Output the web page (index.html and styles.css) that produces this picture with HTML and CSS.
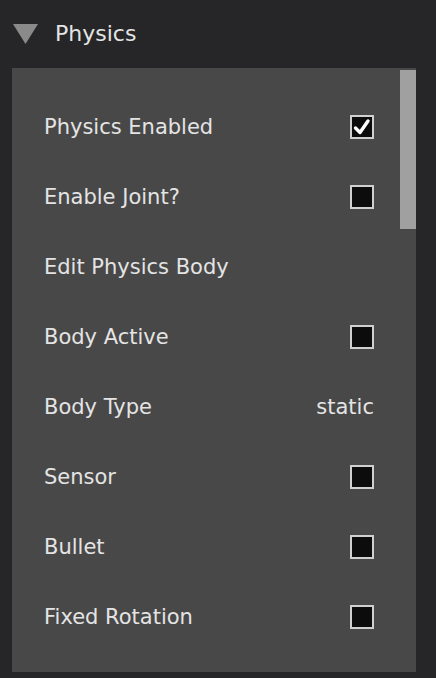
FILE: index.html
```html
<!DOCTYPE html>
<html>
<head>
<meta charset="utf-8">
<link rel="stylesheet" href="styles.css">
</head>
<body>
<div class="header">
  <svg class="tri" width="25" height="20" viewBox="0 0 25 20"><polygon points="0,0 25,0 12.5,20" fill="#8a8a8a"/></svg>
  <span class="title">Physics</span>
</div>
<div class="panel">
  <div class="scrollbar"></div>
  <div class="row"><span class="label">Physics Enabled</span><span class="cb checked"><svg width="20" height="20" viewBox="0 0 20 20"><path d="M3.5 11 L8 15.5 L16 4" fill="none" stroke="#fff" stroke-width="3.4" stroke-linecap="round" stroke-linejoin="round"/></svg></span></div>
  <div class="row"><span class="label">Enable Joint?</span><span class="cb"></span></div>
  <div class="row"><span class="label">Edit Physics Body</span></div>
  <div class="row"><span class="label">Body Active</span><span class="cb"></span></div>
  <div class="row"><span class="label">Body Type</span><span class="value">static</span></div>
  <div class="row"><span class="label">Sensor</span><span class="cb"></span></div>
  <div class="row"><span class="label">Bullet</span><span class="cb"></span></div>
  <div class="row"><span class="label">Fixed Rotation</span><span class="cb"></span></div>
</div>
</body>
</html>
```
FILE: styles.css
```css
html, body {
  margin: 0;
  padding: 0;
  background: #262628;
  width: 436px;
  height: 678px;
  overflow: hidden;
  font-family: "DejaVu Sans", sans-serif;
  color: #e4e4e4;
}
.header {
  height: 68px;
  display: flex;
  align-items: center;
  padding-left: 13px;
  box-sizing: border-box;
}
.tri {
  display: block;
  margin-top: -1px;
}
.title {
  margin-left: 17px;
  font-size: 22px;
  margin-top: -2px;
}
.panel {
  position: relative;
  margin-left: 12px;
  width: 404px;
  height: 604px;
  background: #484848;
  box-sizing: border-box;
  padding-top: 24px;
  padding-left: 32px;
  padding-right: 42px;
}
.scrollbar {
  position: absolute;
  right: 0;
  top: 2px;
  width: 16px;
  height: 159px;
  background: #a0a0a0;
}
.row {
  height: 70px;
  display: flex;
  align-items: center;
  justify-content: space-between;
  font-size: 21px;
}
.cb {
  width: 20px;
  height: 20px;
  border: 2px solid #d0d0d0;
  background: #0c0c0c;
  display: flex;
  align-items: center;
  justify-content: center;
}
.cb svg { display: block; }
```
